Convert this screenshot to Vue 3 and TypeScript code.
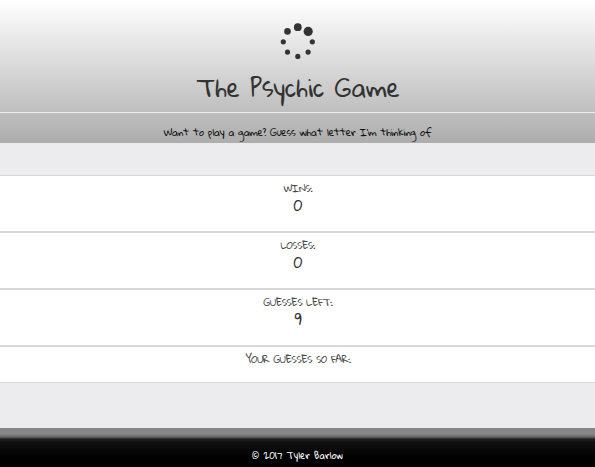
<script setup lang="ts">
interface Stat {
  label: string
  value: string
  name: string
}

const stats: Stat[] = [
  { label: 'WINS:', value: '0', name: 'wins' },
  { label: 'LOSSES:', value: '0', name: 'losses' },
  { label: 'GUESSES LEFT:', value: '9', name: 'left' },
  { label: 'YOUR GUESSES SO FAR:', value: '', name: 'guesses' },
]
</script>

<template>
  <div class="page">
    <header class="header">
      <div class="brand">
        <svg class="spinner" width="36" height="36" viewBox="280 23 36 36" aria-hidden="true">
          <circle cx="297.8" cy="27.2" r="3.9" />
          <circle cx="308.2" cy="31.4" r="4.6" />
          <circle cx="312.3" cy="41.8" r="2.6" />
          <circle cx="308.1" cy="52.1" r="2.6" />
          <circle cx="297.8" cy="56.4" r="2.6" />
          <circle cx="287.5" cy="52.1" r="2.6" />
          <circle cx="283.3" cy="41.8" r="2.6" />
          <circle cx="287.5" cy="31.4" r="3.3" />
        </svg>
        <h1 class="title">The Psychic Game</h1>
      </div>
      <p class="tagline">Want to play a game? Guess what letter I'm thinking of</p>
    </header>
    <main class="stats">
      <section v-for="stat in stats" :key="stat.name" class="stat" :class="stat.name">
        <h2 class="label">{{ stat.label }}</h2>
        <p v-if="stat.value" class="value">{{ stat.value }}</p>
      </section>
    </main>
    <footer class="footer">© 2017 Tyler Barlow</footer>
  </div>
</template>

<style>
body {
  margin: 0;
  background: #ececee;
}
</style>

<style scoped>
.page {
  height: 467px;
  display: flex;
  flex-direction: column;
  overflow: hidden;
  background: #ececee;
  color: #333;
  text-align: center;
  font-family: "Gloria Hallelujah", "Indie Flower", Lato, sans-serif;
}
.header {
  height: 143px;
  background: linear-gradient(#fff, #adadad);
}
.brand {
  box-sizing: border-box;
  height: 113px;
  padding-top: 23px;
  border-bottom: 1px solid #eee;
}
.spinner {
  display: block;
  margin: 0 auto;
  fill: #333;
}
.title {
  margin: 10px 0 0;
  padding-left: 1px;
  font-size: 24px;
  font-weight: 400;
  line-height: 36px;
}
.tagline {
  margin: 11px 0 0;
  font-size: 10px;
  line-height: 16px;
  letter-spacing: -0.34px;
  color: #111;
}
.stats {
  padding-top: 32px;
}
.stat {
  box-sizing: border-box;
  height: 57px;
  padding-top: 4px;
  border: solid #d8d8d8;
  border-width: 1px 0;
  background: #fff;
}
.guesses {
  height: 37px;
}
.label {
  margin: 0;
  padding-left: 1px;
  font-size: 10px;
  font-weight: 400;
  line-height: 16px;
  letter-spacing: -0.42px;
  color: #484848;
}
.value {
  margin: 0;
  padding-left: 1px;
  font-size: 15px;
  line-height: 18px;
}
.footer {
  box-sizing: border-box;
  height: 39px;
  margin-top: auto;
  padding-top: 19px;
  background: linear-gradient(#858586 0, #88888a 6px, #666 9px, #222 11px, #111 14px, #000 30px);
  color: #fff;
  font-size: 9px;
  line-height: 16px;
  letter-spacing: 0.1px;
}
</style>
